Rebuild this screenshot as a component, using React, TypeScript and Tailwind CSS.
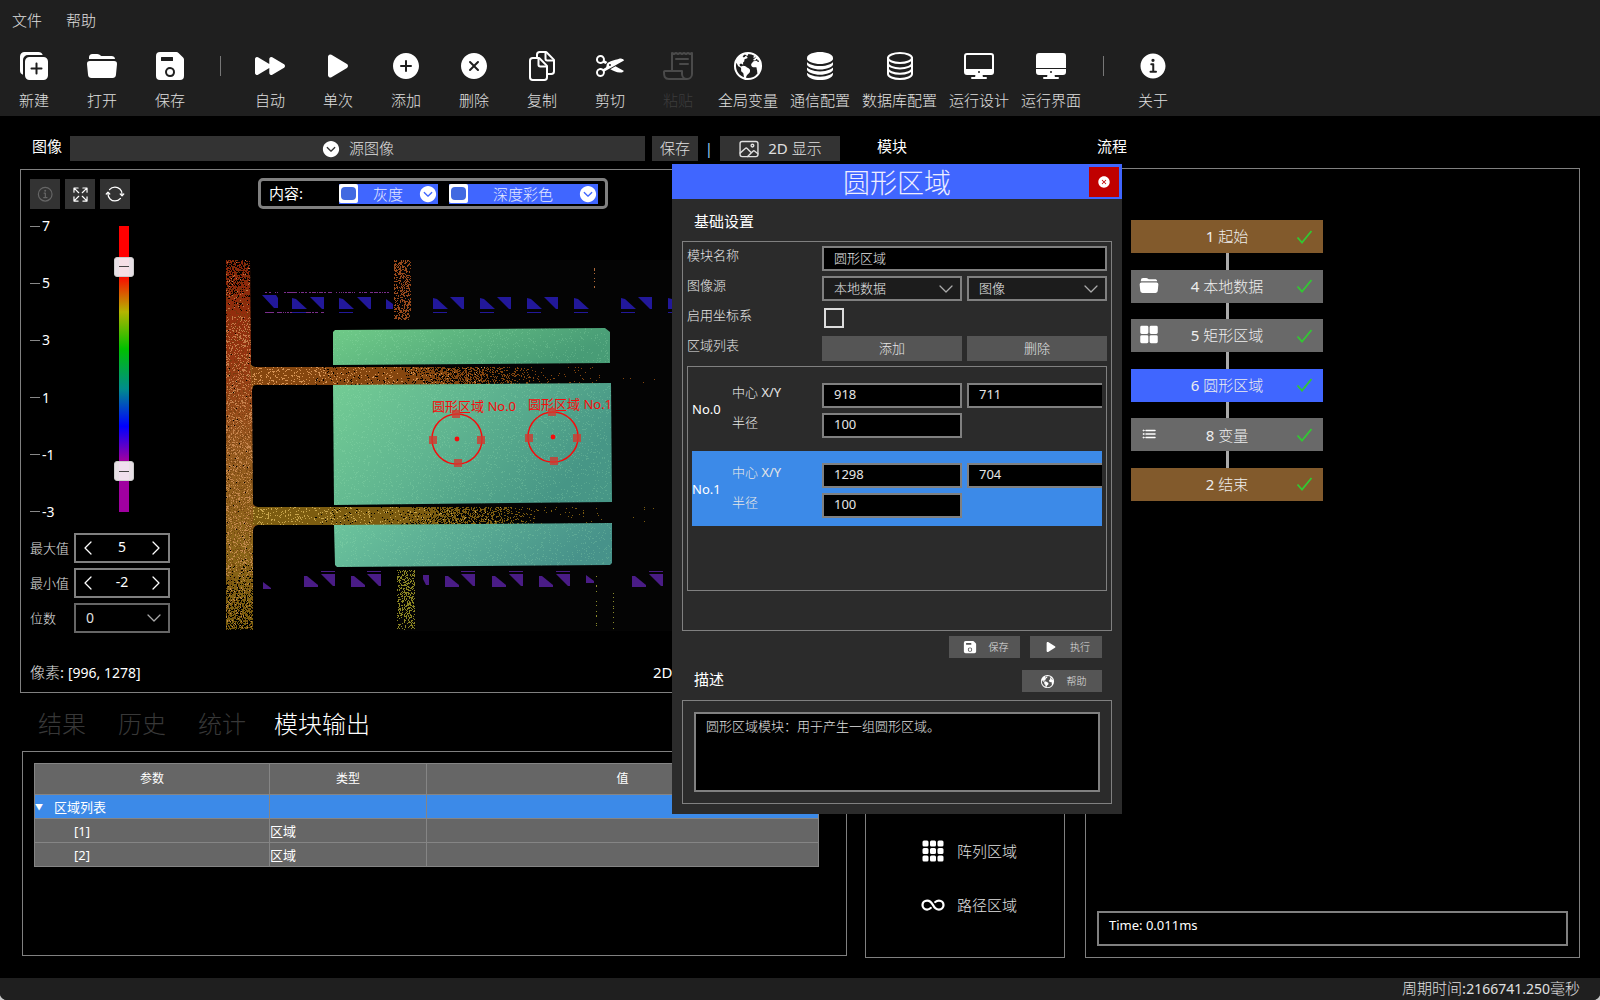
import { useState } from 'react';
import type { ReactNode } from 'react';
import type { IconType } from 'react-icons';
import {
  IoAddCircle,
  IoChevronDownCircle,
  IoCloseCircle,
  IoCut,
  IoDesktop,
  IoDesktopOutline,
  IoDocumentsOutline,
  IoDuplicate,
  IoEarth,
  IoExpand,
  IoFolderOpen,
  IoGrid,
  IoImageOutline,
  IoInfinite,
  IoInformationCircle,
  IoInformationCircleOutline,
  IoList,
  IoPlay,
  IoPlayForward,
  IoReceiptOutline,
  IoSave,
  IoServer,
  IoServerOutline,
  IoSyncOutline,
} from 'react-icons/io5';
import { BsGrid3X3GapFill } from 'react-icons/bs';
import { ChevronDown, ChevronLeft, ChevronRight } from 'lucide-react';
import { clsx } from 'clsx';

type Tool = { label: string; icon: IconType; disabled?: boolean } | 'separator';

const TOOLS: Tool[] = [
  { label: '新建', icon: IoDuplicate },
  { label: '打开', icon: IoFolderOpen },
  { label: '保存', icon: IoSave },
  'separator',
  { label: '自动', icon: IoPlayForward },
  { label: '单次', icon: IoPlay },
  { label: '添加', icon: IoAddCircle },
  { label: '删除', icon: IoCloseCircle },
  { label: '复制', icon: IoDocumentsOutline },
  { label: '剪切', icon: IoCut },
  { label: '粘贴', icon: IoReceiptOutline, disabled: true },
  { label: '全局变量', icon: IoEarth },
  { label: '通信配置', icon: IoServer },
  { label: '数据库配置', icon: IoServerOutline },
  { label: '运行设计', icon: IoDesktopOutline },
  { label: '运行界面', icon: IoDesktop },
  'separator',
  { label: '关于', icon: IoInformationCircle },
];

const TABS = ['结果', '历史', '统计', '模块输出'];

type FlowNode = { id: number; name: string; kind: 'edge' | 'step'; icon?: IconType; iconSize?: number };

const FLOW: FlowNode[] = [
  { id: 1, name: '起始', kind: 'edge' },
  { id: 4, name: '本地数据', kind: 'step', icon: IoFolderOpen, iconSize: 21 },
  { id: 5, name: '矩形区域', kind: 'step', icon: IoGrid, iconSize: 21 },
  { id: 6, name: '圆形区域', kind: 'step' },
  { id: 8, name: '变量', kind: 'step', icon: IoList, iconSize: 16 },
  { id: 2, name: '结束', kind: 'edge' },
];

const REGIONS = [
  { x: '918', y: '711', r: '100' },
  { x: '1298', y: '704', r: '100' },
];

// Headings and table text use the regular cut of the CJK face
const solid = "font-['Noto_Sans','Noto_Sans_CJK_SC',sans-serif]";

function Toolbar() {
  return (
    <header className="bg-[#1f1f1f] h-[116px] shrink-0">
      <nav className="flex gap-6 px-3 pb-2 h-[42px] items-start pt-2 text-[15px] leading-6">
        <button className="h-6">文件</button>
        <button className="h-6">帮助</button>
      </nav>
      <div className="flex">
        {TOOLS.map((tool, i) =>
          tool === 'separator' ? (
            <div key={i} className="w-8 flex justify-center pt-3.5">
              <div className="w-px h-5 bg-[#777]" />
            </div>
          ) : (
            <button
              key={tool.label}
              disabled={tool.disabled}
              className={clsx(
                'min-w-[68px] px-1.5 pt-2 flex flex-col items-center gap-1.5 text-[15px] leading-6',
                tool.disabled && 'text-[#3c3c3c]',
              )}
            >
              <tool.icon size={32} className={tool.disabled ? 'text-[#4a4a4a]' : 'text-white'} />
              {tool.label}
            </button>
          ),
        )}
      </div>
    </header>
  );
}

// Small deterministic generator so the speckle does not change between renders
function mulberry(seed: number) {
  let a = seed;
  return () => {
    a = (a + 0x6d2b79f5) | 0;
    let t = Math.imul(a ^ (a >>> 15), 1 | a);
    t = (t + Math.imul(t ^ (t >>> 7), 61 | t)) ^ t;
    return ((t ^ (t >>> 14)) >>> 0) / 4294967296;
  };
}

function speckle(
  seed: number,
  x0: number,
  y0: number,
  w: number,
  h: number,
  density: (fx: number, fy: number) => number,
) {
  const rnd = mulberry(seed);
  let d = '';
  for (let y = 0; y < h; y++) {
    for (let x = 0; x < w; x++) {
      if (rnd() < density(x / w, y / h)) d += `M${x0 + x} ${y0 + y}h1v1h-1z`;
    }
  }
  return d;
}

const barHoles = speckle(1, 226, 260, 28, 371, (_, y) =>
  y < 0.14 ? 0.4 * (1 - y / 0.14) + 0.03 : y > 0.8 ? (y - 0.8) * 2.2 : 0.008,
);
const barLight = speckle(2, 226, 260, 28, 371, (_, y) => (y < 0.15 ? 0.04 : y > 0.85 ? 0.08 : 0.2));
const barDark = speckle(3, 226, 260, 28, 371, () => 0.2);
const railDensity = (x: number) =>
  x < 0.15 ? 1 : x < 0.35 ? 0.96 : Math.max(0.96 - (x - 0.35) * 2.6, x < 0.85 ? 0.035 : 0.005);
const rail1 = speckle(4, 252, 367, 410, 18, railDensity);
const rail1Light = speckle(5, 252, 367, 410, 18, (x) => 0.16 * Math.max(0, 1 - x * 1.7));
const rail2 = speckle(6, 253, 507, 410, 18, railDensity);
const rail2Light = speckle(7, 253, 507, 410, 18, (x) => 0.14 * Math.max(0, 1 - x * 1.6));
const postTop = speckle(8, 394, 260, 17, 60, () => 0.42);
const postBottom = speckle(9, 397, 570, 18, 60, (_, y) => 0.46 - y * 0.2);
const postFaint = speckle(10, 594, 262, 1, 26, () => 0.35);
const postFaint2 = speckle(11, 596, 570, 1, 60, () => 0.25) + speckle(15, 613, 585, 1, 45, () => 0.12);
const dots = speckle(12, 265, 292, 125, 1, () => 0.5) + speckle(13, 265, 312, 60, 1, () => 0.6);
const plateGrain = speckle(14, 333, 328, 279, 239, () => 0.08);

const UPPER_LEFT = [292, 339, 433, 480, 527, 574, 621, 668];
const UPPER_RIGHT = [310, 357, 450, 497, 544, 638];
const LOWER_LEFT = [304, 351, 445, 492, 539, 632];
const LOWER_RIGHT = [321, 367, 461, 509, 556, 649];

function RegionMarker({ cx, cy, label }: { cx: number; cy: number; label: string }) {
  return (
    <g>
      <text x={cx - 25} y={cy - 28} fontSize="13" fill="#f60c0c" className={solid}>{label}</text>
      <circle cx={cx} cy={cy} r="25" fill="none" stroke="#f60c0c" strokeWidth="1.5" />
      <circle cx={cx} cy={cy} r="2.4" fill="#f60c0c" />
      <g fill="#d23a30" fillOpacity="0.8">
        <rect x={cx - 28} y={cy - 3} width="8" height="8" />
        <rect x={cx + 20} y={cy - 3} width="8" height="8" />
        <rect x={cx - 5} y={cy - 29} width="8" height="8" />
        <rect x={cx - 3} y={cy + 20} width="8" height="8" />
      </g>
    </g>
  );
}

function DepthView() {
  return (
    <svg width="446" height="371" viewBox="226 260 446 371" className="shrink-0" role="img" aria-label="深度彩色">
      <defs>
        <linearGradient id="bar" x1="0" y1="0" x2="0" y2="1">
          <stop offset="0" stopColor="#8c2408" />
          <stop offset="0.25" stopColor="#963310" />
          <stop offset="0.5" stopColor="#96591f" />
          <stop offset="0.75" stopColor="#8c641a" />
          <stop offset="1" stopColor="#7a5f0c" />
        </linearGradient>
        <linearGradient id="plateA" x1="0" y1="0" x2="1" y2="0.3">
          <stop offset="0" stopColor="#70cb88" />
          <stop offset="1" stopColor="#489c76" />
        </linearGradient>
        <linearGradient id="plateB" x1="0" y1="0" x2="1" y2="0.4">
          <stop offset="0" stopColor="#73cc94" />
          <stop offset="0.5" stopColor="#5fb490" />
          <stop offset="1" stopColor="#479686" />
        </linearGradient>
        <linearGradient id="plateC" x1="0" y1="0" x2="1" y2="0.2">
          <stop offset="0" stopColor="#6cc49c" />
          <stop offset="1" stopColor="#47928a" />
        </linearGradient>
        <clipPath id="barClip">
          <path d="M226 260h24l1 105 2 2v20l-1 3 1 115v20l0 105h-27z" />
        </clipPath>
        <clipPath id="plates">
          <path d="M333 331l276-3v35l-276 2zM333 385l278-2v119l-277 3zM334 525l278-2v42l-276 2z" />
        </clipPath>
        <clipPath id="extent">
          <rect x="226" y="260" width="386" height="371" />
        </clipPath>
      </defs>

      <rect x="400" y="260" width="272" height="371" fill="#040404" />

      <g clipPath="url(#barClip)" shapeRendering="crispEdges">
        <rect x="226" y="260" width="28" height="371" fill="url(#bar)" />
        <path d={barDark} fill="#6b3a0a" fillOpacity="0.6" />
        <path d={barLight} fill="#dc9a62" fillOpacity="0.7" />
        <path d={barHoles} fill="#000" />
      </g>

      <path d="M250 363q2 4 6 4v18q-4 0-4 5zM252 502q2 5 6 5v18q-5 1-5 6z" fill="#8a5518" />
      <g shapeRendering="crispEdges">
        <path d={rail1} fill="#85460f" />
        <path d={rail1Light} fill="#d59253" />
        <path d={rail2} fill="#7c5c10" />
        <path d={rail2Light} fill="#c8a54c" />
        <path d={postTop} fill="#9a4a1c" />
        <path d={postBottom} fill="#8a8423" />
        <path d={postFaint} fill="#b06a3a" />
        <path d={postFaint2} fill="#8c8c2c" />
        <path d={dots} fill="#7a2e8c" />
      </g>

      <g fill="#22189a">
        <path d="M262 295h14l2 3v10h-4zM386 299l7 5v5h-7z" />
        {UPPER_LEFT.map((x) => (
          <path key={x} d={`M${x} 298l4 1 11 10h-15zM${x} 312h14v1h-14z`} />
        ))}
        {UPPER_RIGHT.map((x) => (
          <path key={x} d={`M${x} 297h14v12h-2z`} />
        ))}
      </g>
      <g fill="#4a1c86">
        <path d="M263 582l8 6v1h-8zM423 575h6v10h-3l-3-6zM586 575l8 6v2h-8z" />
        {LOWER_LEFT.map((x) => (
          <path key={x} d={`M${x} 576l3 0 11 9v2h-14z`} />
        ))}
        {LOWER_RIGHT.map((x) => (
          <path key={x} d={`M${x} 574h14v12h-2zM${x} 571h14v1h-14z`} />
        ))}
      </g>

      <path d="M333 332l2-2 270-2 5 4v31l-277 2z" fill="url(#plateA)" />
      <path d="M333 385l278-2 1 119-278 3z" fill="url(#plateB)" />
      <path d="M334 525l278-2v40l-2 2-273 2-2-2z" fill="url(#plateC)" />
      <g clipPath="url(#plates)" shapeRendering="crispEdges">
        <path d={plateGrain} fill="#a0e8b8" fillOpacity="0.22" />
      </g>

      <g clipPath="url(#extent)">
        <RegionMarker cx={457} cy={439} label="圆形区域 No.0" />
        <RegionMarker cx={553} cy={437} label="圆形区域 No.1" />
      </g>
    </svg>
  );
}

const thumb =
  'appearance-none bg-transparent pointer-events-none [writing-mode:vertical-lr] [direction:rtl] [&::-webkit-slider-thumb]:appearance-none [&::-webkit-slider-thumb]:pointer-events-auto [&::-webkit-slider-thumb]:w-5 [&::-webkit-slider-thumb]:h-5 [&::-webkit-slider-thumb]:rounded-[3px] [&::-webkit-slider-thumb]:border [&::-webkit-slider-thumb]:border-[#ccc] [&::-webkit-slider-thumb]:bg-[linear-gradient(#444,#444)] [&::-webkit-slider-thumb]:bg-[length:10px_1px] [&::-webkit-slider-thumb]:bg-center [&::-webkit-slider-thumb]:bg-no-repeat [&::-webkit-slider-thumb]:bg-[#f4ecf2]/95';

function DepthScale() {
  const [high, setHigh] = useState(5.84);
  const [low, setLow] = useState(-1.85);
  return (
    <div className="flex h-[306px]">
      <ul className="flex flex-col justify-between w-[84px] text-sm leading-5 text-white">
        {[7, 5, 3, 1, -1, -3].map((v) => (
          <li key={v} className="flex items-center gap-0.5">
            <span className="w-2.5 h-px bg-[#888]" />
            {v}
          </li>
        ))}
      </ul>
      <div className="relative w-5 my-2.5">
        <div className="mx-auto w-2.5 h-full bg-[linear-gradient(to_bottom,#ff0000_0%,#ff0000_17%,#b4b400_30%,#00c000_43%,#008c8c_57%,#0000ff_70%,#a000a0_82%,#a000a0_100%)]" />
        <input
          type="range" min={-3} max={7} step={0.01} value={high} aria-label="上限"
          onChange={(e) => setHigh(Number(e.target.value))}
          className={clsx('absolute inset-0 w-5 h-full', thumb)}
        />
        <input
          type="range" min={-3} max={7} step={0.01} value={low} aria-label="下限"
          onChange={(e) => setLow(Number(e.target.value))}
          className={clsx('absolute inset-0 w-5 h-full', thumb)}
        />
      </div>
    </div>
  );
}

function Stepper({ id, label, initial }: { id: string; label: string; initial: number }) {
  const [value, setValue] = useState(initial);
  return (
    <div className="flex items-center h-[30px]">
      <label htmlFor={id} className="w-11 text-[13px] pt-0.5 shrink-0">{label}</label>
      <div className="flex flex-1 h-full items-center border-2 border-[#808080] text-white">
        <button aria-label="减" onClick={() => setValue(value - 1)}><ChevronLeft size={24} strokeWidth={1.25} /></button>
        <input
          id={id}
          value={value}
          onChange={(e) => setValue(Number(e.target.value) || 0)}
          className="w-0 flex-1 text-center text-sm bg-transparent outline-none pb-0.5"
        />
        <button aria-label="加" onClick={() => setValue(value + 1)}><ChevronRight size={24} strokeWidth={1.25} /></button>
      </div>
    </div>
  );
}

function ContentToggle({ label, className }: { label: string; className: string }) {
  return (
    <div className={clsx('flex items-center h-5 bg-[#4066ff] text-[#e4e9ff]', className)}>
      <input
        type="checkbox"
        defaultChecked
        aria-label={label}
        className="appearance-none w-[19px] h-[19px] rounded-[2px] bg-white grid place-items-center before:block before:w-[15px] before:h-[13px] before:rounded-[4px] checked:before:bg-[#4169e1]"
      />
      <button className="flex flex-1 items-center text-[15px] leading-5">
        <span className="flex-1">{label}</span>
        <IoChevronDownCircle size={20} className="text-white" />
      </button>
    </div>
  );
}

function IconButton({ label, dim, children }: { label: string; dim?: boolean; children: ReactNode }) {
  return (
    <button
      aria-label={label}
      disabled={dim}
      className={clsx('w-[30px] h-[30px] bg-[#333] grid place-items-center', dim ? 'text-[#666]' : 'text-white')}
    >
      {children}
    </button>
  );
}

function ImagePanel() {
  return (
    <section className="flex-1 flex flex-col border border-[#808080] px-[9px] pt-2 pb-2">
      <div className="flex items-end">
        <div className="flex gap-[5px] w-[228px]">
          <IconButton label="信息" dim><IoInformationCircleOutline size={19} /></IconButton>
          <IconButton label="适应"><IoExpand size={19} /></IconButton>
          <IconButton label="刷新"><IoSyncOutline size={20} /></IconButton>
        </div>
        <div className="flex items-center h-[31px] w-[350px] border-[3px] border-[#808080] rounded-[5px] pl-2">
          <span className={clsx('w-[70px] text-[15px] text-white', solid)}>内容:</span>
          <ContentToggle label="灰度" className="w-[99px]" />
          <ContentToggle label="深度彩色" className="w-[149px] ml-[11px]" />
        </div>
      </div>

      <div className="flex flex-1 pt-[7px]">
        <div className="w-[140px] shrink-0">
          <DepthScale />
          <div className="flex flex-col gap-[5px] mt-[11px]">
            <Stepper id="max" label="最大值" initial={5} />
            <Stepper id="min" label="最小值" initial={-2} />
            <div className="flex items-center h-[30px]">
              <label htmlFor="digits" className="w-11 text-[13px] pt-0.5">位数</label>
              <SelectBox id="digits" options={['0', '1', '2']} className="flex-1 h-full text-sm bg-black border-[#666]" />
            </div>
          </div>
        </div>
        <div className="ml-14 mt-11">
          <DepthView />
        </div>
      </div>

      <div className="flex text-[15px] leading-6">
        <span className="w-[623px]">像素: <span className="text-sm text-white">[996, 1278]</span></span>
        <span className="text-white">2D</span>
      </div>
    </section>
  );
}

function SelectBox({ id, options, label, className }: { id?: string; options: string[]; label?: string; className?: string }) {
  return (
    <div className={clsx('relative border-2', className)}>
      <select id={id} aria-label={label} className="appearance-none w-full h-full pl-2.5 pr-6 outline-none bg-transparent">
        {options.map((o) => <option key={o} className="bg-[#1c1c1c]">{o}</option>)}
      </select>
      <ChevronDown size={24} strokeWidth={1.25} className="absolute right-0.5 top-1/2 -translate-y-1/2 text-[#aaa] pointer-events-none" />
    </div>
  );
}

function OutputPanel() {
  return (
    <section className="h-[205px] shrink-0 ml-0.5 border border-[#808080] pt-[11px] pl-[11px] pr-[27px]">
      <table className={clsx('w-full table-fixed border-collapse bg-[#666] text-[13px] leading-5 text-white [&_td]:border [&_td]:border-[#858585] [&_th]:border [&_th]:border-[#858585] [&_td]:p-0', solid)}>
        <colgroup>
          <col className="w-[235px]" />
          <col className="w-[157px]" />
          <col />
        </colgroup>
        <thead>
          <tr className="h-[31px] text-xs">
            <th className="font-normal">参数</th>
            <th className="font-normal">类型</th>
            <th className="font-normal">值</th>
          </tr>
        </thead>
        <tbody>
          <tr className="h-6 bg-[#3c8ae8]">
            <td>
              <span className="flex items-center">
                <span className="w-[19px] text-[8px]">▼</span>区域列表
              </span>
            </td>
            <td />
            <td />
          </tr>
          {['[1]', '[2]'].map((name) => (
            <tr key={name} className="h-6">
              <td><span className="pl-[39px]">{name}</span></td>
              <td>区域</td>
              <td />
            </tr>
          ))}
        </tbody>
      </table>
    </section>
  );
}

function ModulePanel() {
  return (
    <div className="w-[200px] shrink-0 flex flex-col">
      <h2 className={clsx('h-8 pl-3 text-[15px] leading-5 text-white', solid)}>模块</h2>
      <div className="flex-1 flex flex-col justify-end gap-[30px] border border-[#808080] pl-[55px] pb-10 text-[15px] leading-6">
        <button className="flex items-center gap-3"><BsGrid3X3GapFill size={24} className="text-white" />阵列区域</button>
        <button className="flex items-center gap-3"><IoInfinite size={24} className="text-white" />路径区域</button>
      </div>
    </div>
  );
}

function FlowPanel({ selected, onSelect }: { selected: number; onSelect: (id: number) => void }) {
  return (
    <div className="flex-[495] flex flex-col">
      <h2 className={clsx('h-8 pl-3 text-[15px] leading-5 text-white', solid)}>流程</h2>
      <div className="flex-1 flex flex-col justify-between border border-[#808080] px-[11px] pb-[11px]">
        <div className="ml-[34px] mt-[51px] w-48 h-[281px] flex flex-col items-center">
          {FLOW.map((node, i) => (
            <FlowItem
              key={node.id}
              node={node}
              first={i === 0}
              active={node.id === selected}
              onClick={() => onSelect(node.id)}
            />
          ))}
        </div>
        <textarea
          readOnly
          aria-label="日志"
          value="Time: 0.011ms"
          className="block h-[35px] w-full resize-none overflow-hidden border-2 border-[#808080] px-2.5 py-0.5 text-[13px] leading-5 text-white outline-none"
        />
      </div>
    </div>
  );
}

function FlowItem({ node, first, active, onClick }: { node: FlowNode; first: boolean; active: boolean; onClick: () => void }) {
  const Icon = node.icon;
  return (
    <>
      {!first && <div className="flex-1 w-[3px] bg-[#aaa]" />}
      <button
        onClick={onClick}
        className={clsx(
          'flex items-center w-full h-[33px] px-2 text-[15px] text-[#eee]',
          active ? 'bg-[#4066ff]' : node.kind === 'edge' ? 'bg-[#825a2c]' : 'bg-[#696969]',
        )}
      >
        <span className="w-5 pb-0.5 flex justify-center text-white">{Icon && <Icon size={node.iconSize} />}</span>
        <span className="flex-1">{node.id} {node.name}</span>
        <svg width="20" height="20" viewBox="0 0 20 20" fill="none" stroke="#32c832" strokeWidth="1.8">
          <path d="M2.5 10.5l4.5 5L16.500 4" />
        </svg>
      </button>
    </>
  );
}

const field = 'h-[25px] min-w-0 border-2 border-[#808080] bg-black px-2.5 outline-none';

function RegionRow({ index, region, active, onClick }: { index: number; region: (typeof REGIONS)[number]; active: boolean; onClick: () => void }) {
  return (
    <li onClick={onClick} className={clsx('flex h-[75px] pt-3 overflow-hidden', active && 'bg-[#3c8ae8]')}>
      <span className="w-10 shrink-0 pt-4 leading-5 text-white">No.{index}</span>
      <div className="w-[415px] shrink-0 grid grid-cols-[90px_140px_145px] gap-y-[5px] content-start">
        <label htmlFor={`x${index}`} className="leading-[18px]">中心 X/Y</label>
        <input id={`x${index}`} defaultValue={region.x} className={clsx(field, 'pb-[3px]')} />
        <input aria-label={`No.${index} Y`} defaultValue={region.y} className={clsx(field, 'ml-[5px] pb-[3px]')} />
        <label htmlFor={`r${index}`} className="leading-[18px]">半径</label>
        <input id={`r${index}`} defaultValue={region.r} className={clsx(field, 'pb-[3px]')} />
      </div>
    </li>
  );
}

function RegionDialog({ onClose }: { onClose: () => void }) {
  const [active, setActive] = useState(1);
  return (
    <div role="dialog" aria-label="圆形区域" className="absolute left-[672px] top-[164px] w-[450px] bg-[#2b2b2b] pb-2.5 text-[13px]">
      <div className="flex items-center h-[35px] bg-[#4066ff] pl-[33px] pr-[3px]">
        <h1 className="flex-1 pt-0.5 text-center text-[27px] leading-8 text-[#eef]">圆形区域</h1>
        <button aria-label="关闭" onClick={onClose} className="w-[30px] h-[30px] bg-[#c00000] grid place-items-center">
          <IoCloseCircle size={14} className="text-white" />
        </button>
      </div>

      <h2 className={clsx('h-[42px] pl-[22px] pt-3 text-[15px] leading-5 text-white', solid)}>基础设置</h2>
      <div className="mx-2.5 h-[390px] border border-[#808080] p-1 text-[#e6e6e6]">
        <div className="grid grid-cols-[130px_1fr_1fr] gap-x-[5px] gap-y-[5px]">
          <label htmlFor="name" className="leading-[18px]">模块名称</label>
          <input id="name" defaultValue="圆形区域" className={clsx(field, 'col-span-2 pb-0.5')} />
          <label htmlFor="source" className="leading-[18px]">图像源</label>
          <SelectBox id="source" options={['本地数据']} className="h-[25px] bg-[#1c1c1c] border-[#808080]" />
          <SelectBox label="图像" options={['图像']} className="h-[25px] bg-[#1c1c1c] border-[#808080]" />
          <label htmlFor="coord" className="leading-[18px]">启用坐标系</label>
          <div className="col-span-2 h-[25px] pl-0.5 pt-0.5">
            <input id="coord" type="checkbox" className="block appearance-none w-5 h-5 border-2 border-[#ddd]" />
          </div>
          <span className="leading-[18px]">区域列表</span>
          <button className="h-[25px] bg-[#555]">添加</button>
          <button className="h-[25px] bg-[#555]">删除</button>
        </div>
        <ul className="mt-[5px] h-[225px] border border-[#808080] p-1 flex flex-col gap-[5px]">
          {REGIONS.map((r, i) => (
            <RegionRow key={i} index={i} region={r} active={i === active} onClick={() => setActive(i)} />
          ))}
        </ul>
      </div>

      <div className="flex justify-end gap-2.5 pr-5 pt-[5px] text-[10px]">
        <button className="flex items-center justify-center gap-3 pl-0.5 w-[71px] h-[22px] bg-[#555]"><IoSave size={14} className="text-white" />保存</button>
        <button className="flex items-center justify-center gap-3 pl-0.5 w-[72px] h-[22px] bg-[#555]"><IoPlay size={14} className="text-white" />执行</button>
      </div>
      <div className="flex items-center justify-between h-[42px] pl-[22px] pr-5">
        <h2 className={clsx('text-[15px] leading-5 text-white', solid)}>描述</h2>
        <button className="flex items-center justify-center gap-3 pl-0.5 w-20 h-[22px] mt-1 bg-[#555] text-[10px]"><IoEarth size={15} className="text-white" />帮助</button>
      </div>

      <div className="mx-2.5 border border-[#808080] p-[11px]">
        <textarea
          readOnly
          aria-label="描述"
          value="圆形区域模块：用于产生一组圆形区域。"
          className="block w-full h-20 resize-none border-2 border-[#808080] bg-black px-2.5 py-0.5 leading-5 outline-none"
        />
      </div>
    </div>
  );
}

export default function App() {
  const [tab, setTab] = useState('模块输出');
  const [selected, setSelected] = useState(6);
  const [open, setOpen] = useState(true);

  return (
    <div className="min-h-screen bg-[#c8c8c8]">
      <div className="relative min-h-screen flex flex-col overflow-hidden rounded-b-[7px] bg-black text-[#e0e0e0] font-normal font-['Noto_Sans','Noto_Sans_CJK_SC_Light','Noto_Sans_CJK_SC',sans-serif]">
        <Toolbar />
        <main className="flex-1 flex pt-5 px-5 pb-5">
          <div className="flex-[827] flex flex-col pb-0.5 min-w-0">
            <div className="flex items-center h-[25px] mb-2 text-[15px]">
              <h2 className={clsx('w-[50px] pl-3 pb-1.5 text-white leading-5 shrink-0', solid)}>图像</h2>
              <button className="flex-1 h-full flex items-center justify-center gap-2 bg-[#333]">
                <IoChevronDownCircle size={20} className="text-white" />源图像
              </button>
              <button className="w-[46px] h-full ml-[7px] bg-[#333]">保存</button>
              <span className="w-[22px] text-center text-[#9cf]">|</span>
              <button className="w-[120px] h-full mr-[7px] flex items-center justify-center gap-2 bg-[#333]">
                <IoImageOutline size={22} />2D 显示
              </button>
            </div>
            <ImagePanel />
            <div role="tablist" className="flex items-start h-[58px] pl-0.5 pt-3 text-2xl leading-[38px]">
              {TABS.map((t) => (
                <button key={t} role="tab" aria-selected={t === tab} onClick={() => setTab(t)} className={clsx('min-w-20 px-3', t === tab ? 'text-white' : 'text-[#383838]')}>
                  {t}
                </button>
              ))}
            </div>
            <OutputPanel />
          </div>
          <div className="w-[18px] shrink-0" />
          <ModulePanel />
          <div className="w-5 shrink-0" />
          <FlowPanel selected={selected} onSelect={(id) => { setSelected(id); setOpen(true); }} />
        </main>
        <footer className="h-[22px] shrink-0 bg-[#1f1f1f] px-5 text-right text-[15px] leading-5">
          周期时间:<span className="text-sm">2166741.250</span>毫秒
        </footer>
        {open && <RegionDialog onClose={() => setOpen(false)} />}
      </div>
    </div>
  );
}
